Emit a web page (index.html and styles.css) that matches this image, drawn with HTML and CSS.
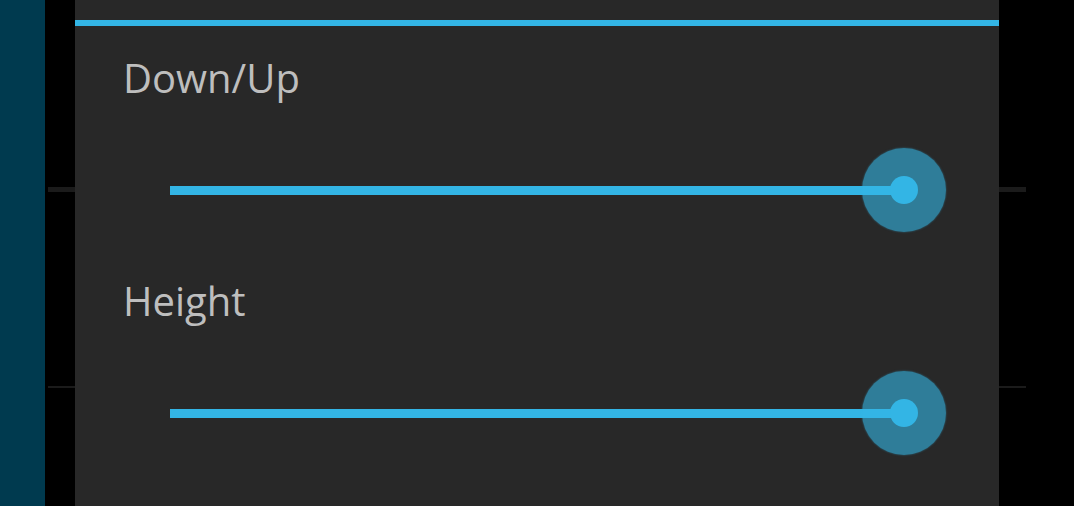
FILE: index.html
```html
<!DOCTYPE html>
<html>
<head>
<meta charset="utf-8">
<link rel="stylesheet" href="styles.css">
</head>
<body>
<div class="screen">
  <div class="rail"></div>
  <div class="list">
    <div class="row row-a"></div>
    <div class="divider thick"></div>
    <div class="row row-b"></div>
    <div class="divider thin"></div>
  </div>
  <div class="dialog">
    <div class="accent"></div>
    <div class="setting first">
      <div class="label">Down/Up</div>
      <div class="slider">
        <div class="track"></div>
        <div class="thumb"><div class="dot"></div></div>
      </div>
    </div>
    <div class="setting second">
      <div class="label">Height</div>
      <div class="slider">
        <div class="track"></div>
        <div class="thumb"><div class="dot"></div></div>
      </div>
    </div>
  </div>
</div>
</body>
</html>
```
FILE: styles.css
```css
html, body {
  margin: 0;
  padding: 0;
  background: #000;
}
.screen {
  position: relative;
  width: 1074px;
  height: 506px;
  overflow: hidden;
  display: flex;
  background: #000;
  font-family: "Open Sans", "Noto Sans", sans-serif;
}
.rail {
  width: 45px;
  flex: none;
  background: #003a4f;
}
.list {
  flex: 1;
  display: flex;
  flex-direction: column;
  padding-left: 3px;
}
.row-a { height: 187px; }
.row-b { height: 194px; }
.divider {
  width: 978px;
  background: #1b1b1b;
}
.divider.thick { height: 5px; }
.divider.thin { height: 2px; }
.dialog {
  position: absolute;
  left: 75px;
  top: 0;
  width: 924px;
  height: 506px;
  background: #282828;
  padding: 20px 0 0 48px;
  box-sizing: border-box;
}
.accent {
  height: 6px;
  margin-left: -48px;
  background: #33b5e5;
}
.label {
  font-size: 40px;
  line-height: 48px;
  color: #bebebe;
}
.first .label { margin-top: 28px; }
.first .slider { margin-top: 46px; }
.second .label { margin-top: 45px; }
.second .slider { margin-top: 46px; }
.slider {
  position: relative;
  height: 84px;
  width: 776px;
  margin-left: 47px;
  display: flex;
  align-items: center;
}
.track {
  width: 734px;
  height: 9px;
  background: #33b5e5;
}
.thumb {
  position: absolute;
  right: 0;
  top: 0;
  width: 84px;
  height: 84px;
  border-radius: 50%;
  background: rgba(51, 181, 229, 0.6);
  box-shadow: 0 0 2px rgba(51, 181, 229, 0.5);
  display: flex;
  align-items: center;
  justify-content: center;
}
.dot {
  width: 28px;
  height: 28px;
  border-radius: 50%;
  background: #33b5e5;
}
```
